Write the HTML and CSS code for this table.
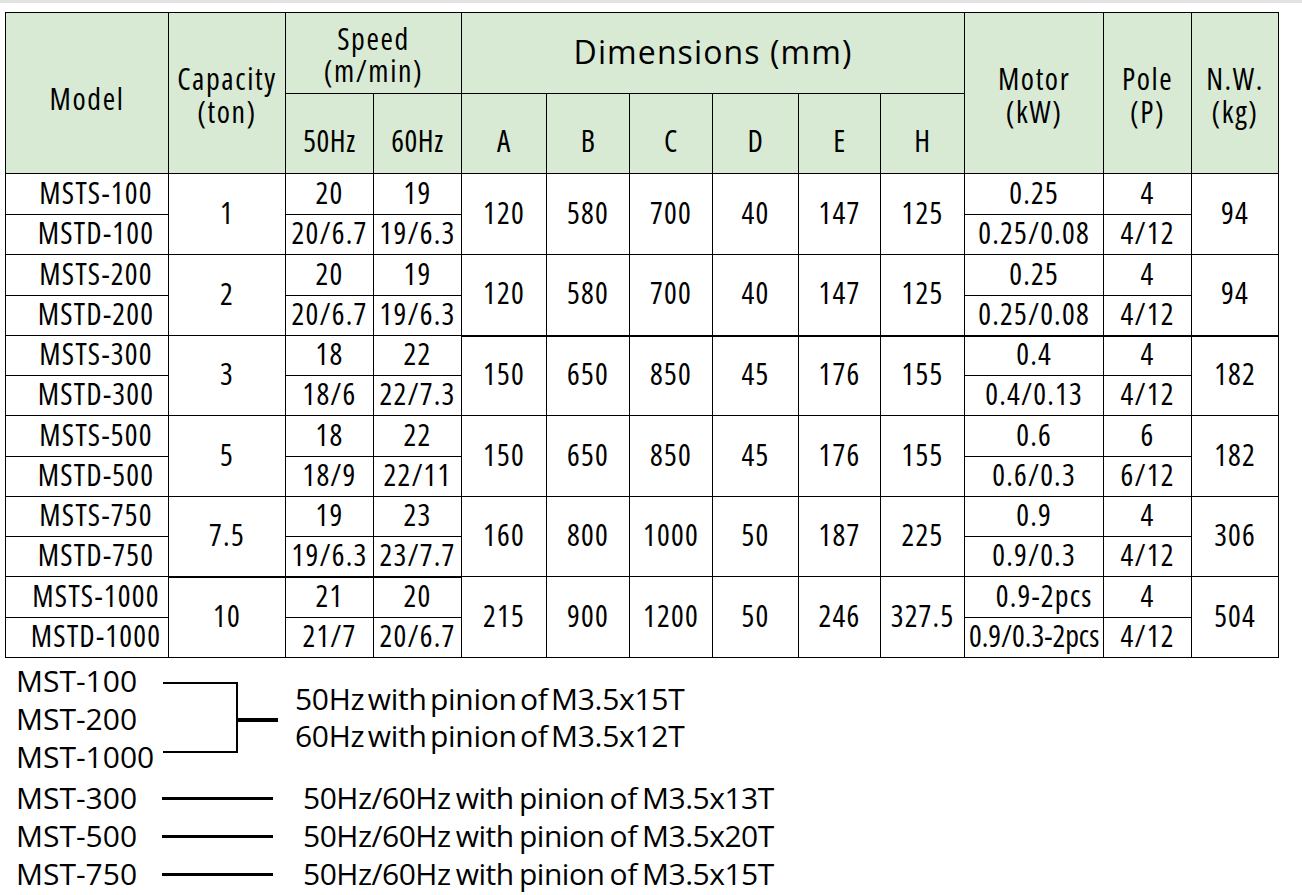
FILE: index.html
```html
<!DOCTYPE html>
<html lang="en">
<head>
<meta charset="utf-8">
<title>MST Specifications</title>
<link rel="stylesheet" href="styles.css">
</head>
<body>
<div class="topbar"></div>
<div class="sheet">
<table class="spec">
<colgroup>
<col class="c-model"><col class="c-cap"><col class="c-hz"><col class="c-hz">
<col class="c-a"><col class="c-b"><col class="c-c"><col class="c-d"><col class="c-e"><col class="c-h">
<col class="c-motor"><col class="c-pole"><col class="c-nw">
</colgroup>
<thead>
<tr class="hr1">
<th rowspan="2" class="h-model">Model</th>
<th rowspan="2" class="h-two">Capacity<br>(ton)</th>
<th colspan="2" class="h-speed">Speed<br>(m/min)</th>
<th colspan="6" class="h-dim">Dimensions (mm)</th>
<th rowspan="2" class="h-two">Motor<br>(kW)</th>
<th rowspan="2" class="h-two">Pole<br>(P)</th>
<th rowspan="2" class="h-two">N.W.<br>(kg)</th>
</tr>
<tr class="hr2">
<th class="h-sub">50Hz</th><th class="h-sub">60Hz</th>
<th class="h-sub">A</th><th class="h-sub">B</th><th class="h-sub">C</th><th class="h-sub">D</th><th class="h-sub">E</th><th class="h-sub">H</th>
</tr>
</thead>
<tbody>
<tr class="r1"><td class="model">MSTS-100</td><td rowspan="2">1</td><td>20</td><td>19</td><td rowspan="2">120</td><td rowspan="2">580</td><td rowspan="2">700</td><td rowspan="2">40</td><td rowspan="2">147</td><td rowspan="2">125</td><td>0.25</td><td>4</td><td rowspan="2">94</td></tr>
<tr class="r2"><td class="model">MSTD-100</td><td>20/6.7</td><td>19/6.3</td><td>0.25/0.08</td><td>4/12</td></tr>

<tr class="r1"><td class="model">MSTS-200</td><td rowspan="2">2</td><td>20</td><td>19</td><td rowspan="2">120</td><td rowspan="2">580</td><td rowspan="2">700</td><td rowspan="2">40</td><td rowspan="2">147</td><td rowspan="2">125</td><td>0.25</td><td>4</td><td rowspan="2">94</td></tr>
<tr class="r2"><td class="model">MSTD-200</td><td>20/6.7</td><td>19/6.3</td><td class="bb">0.25/0.08</td><td class="bb">4/12</td></tr>

<tr class="r1 short"><td class="model">MSTS-300</td><td rowspan="2">3</td><td>18</td><td>22</td><td rowspan="2" class="bt">150</td><td rowspan="2" class="bt">650</td><td rowspan="2" class="bt">850</td><td rowspan="2" class="bt">45</td><td rowspan="2" class="bt">176</td><td rowspan="2" class="bt">155</td><td class="bt">0.4</td><td class="bt">4</td><td rowspan="2" class="bt">182</td></tr>
<tr class="r2"><td class="model">MSTD-300</td><td>18/6</td><td>22/7.3</td><td>0.4/0.13</td><td>4/12</td></tr>

<tr class="r1"><td class="model">MSTS-500</td><td rowspan="2">5</td><td>18</td><td>22</td><td rowspan="2">150</td><td rowspan="2">650</td><td rowspan="2">850</td><td rowspan="2">45</td><td rowspan="2">176</td><td rowspan="2">155</td><td>0.6</td><td>6</td><td rowspan="2">182</td></tr>
<tr class="r2"><td class="model">MSTD-500</td><td>18/9</td><td>22/11</td><td>0.6/0.3</td><td>6/12</td></tr>

<tr class="r1 short"><td class="model">MSTS-750</td><td rowspan="2">7.5</td><td>19</td><td>23</td><td rowspan="2">160</td><td rowspan="2">800</td><td rowspan="2">1000</td><td rowspan="2">50</td><td rowspan="2">187</td><td rowspan="2">225</td><td>0.9</td><td>4</td><td rowspan="2">306</td></tr>
<tr class="r2"><td class="model">MSTD-750</td><td>19/6.3</td><td>23/7.7</td><td>0.9/0.3</td><td>4/12</td></tr>

<tr class="r1"><td class="model">MSTS-1000</td><td rowspan="2" class="bt">10</td><td class="bt">21</td><td class="bt">20</td><td rowspan="2">215</td><td rowspan="2">900</td><td rowspan="2">1200</td><td rowspan="2">50</td><td rowspan="2">246</td><td rowspan="2">327.5</td><td class="shift">0.9-2pcs</td><td>4</td><td rowspan="2">504</td></tr>
<tr class="r2"><td class="model">MSTD-1000</td><td>21/7</td><td>20/6.7</td><td class="tight">0.9/0.3-2pcs</td><td>4/12</td></tr>
</tbody>
</table>

<div class="notes">
<div class="group">
<div class="labels">
<div>MST-100</div>
<div>MST-200</div>
<div>MST-1000</div>
</div>
<div class="bracket"></div>
<div class="stem"></div>
<div class="gtext">
<div>50Hz with pinion of M3.5x15T</div>
<div>60Hz with pinion of M3.5x12T</div>
</div>
</div>
<div class="single first"><span class="lbl">MST-300</span><span class="dash"></span><span class="stxt">50Hz/60Hz with pinion of M3.5x13T</span></div>
<div class="single"><span class="lbl">MST-500</span><span class="dash"></span><span class="stxt">50Hz/60Hz with pinion of M3.5x20T</span></div>
<div class="single"><span class="lbl">MST-750</span><span class="dash"></span><span class="stxt">50Hz/60Hz with pinion of M3.5x15T</span></div>
</div>
</div>
</body>
</html>
```
FILE: styles.css
```css
html, body {
  margin: 0;
  padding: 0;
  background: #fff;
}
body {
  font-family: "Open Sans", "DejaVu Sans", sans-serif;
  color: #000;
  width: 1302px;
  height: 895px;
  overflow: hidden;
}
.topbar {
  height: 3px;
  background: #e2e2e2;
}
.sheet {
  padding: 9px 0 0 5px;
}
.spec {
  border-collapse: collapse;
  table-layout: fixed;
  width: 1274px;
}
.c-model { width: 163px; }
.c-cap { width: 117px; }
.c-hz { width: 88px; }
.c-a { width: 85px; }
.c-b { width: 83px; }
.c-c { width: 83px; }
.c-d { width: 86px; }
.c-e { width: 82px; }
.c-h { width: 84px; }
.c-motor { width: 139px; }
.c-pole { width: 88px; }
.c-nw { width: 87px; }

.spec th, .spec td {
  border: 1px solid #000;
  padding: 0;
  text-align: center;
  vertical-align: middle;
  font-weight: normal;
  font-size: 30px;
  font-stretch: 75%;
  line-height: 30px;
  white-space: nowrap;
}
.spec td {
  letter-spacing: 1.2px;
  padding-bottom: 3px;
}
.spec th {
  background: #d8e9d4;
  letter-spacing: 1.6px;
}
.hr1 { height: 81px; }
.hr2 { height: 80px; }
.spec th.h-two {
  line-height: 33px;
  padding-top: 3px;
}
.spec th.h-model { padding-top: 12px; }
.spec th.h-speed {
  line-height: 32px;
  padding-top: 3px;
}
.spec th.h-dim {
  font-size: 32px;
  font-stretch: 100%;
  letter-spacing: 1.1px;
  padding-bottom: 2px;
}
.spec th.h-sub {
  padding-top: 14px;
  letter-spacing: 0.6px;
}
.r1 { height: 41px; }
.r1.short { height: 40px; }
.r2 { height: 40px; }
.spec td.model { padding-left: 18px; }
.spec td.tight { letter-spacing: 0; }
.spec td.shift { padding-left: 20px; }
.spec .bt { border-top-width: 2px; }
.spec .bb { border-bottom-width: 2px; }

.notes {
  font-size: 30px;
  line-height: 1;
  padding-left: 11px;
}
.group {
  display: flex;
  align-items: flex-start;
}
.labels {
  width: 147px;
  flex: none;
  padding-top: 4px;
  display: flex;
  flex-direction: column;
}
.labels div {
  height: 38px;
  line-height: 38px;
  white-space: nowrap;
}
.bracket {
  flex: none;
  width: 73px;
  height: 67px;
  margin-top: 24px;
  border: 2px solid #000;
  border-left: none;
}
.stem {
  flex: none;
  width: 40px;
  height: 4px;
  margin-top: 60px;
  background: #000;
}
.gtext {
  margin-left: 17px;
  margin-top: 22px;
  word-spacing: -4px;
  letter-spacing: -0.3px;
}
.gtext div {
  height: 37px;
  line-height: 37px;
  white-space: nowrap;
}
.single {
  display: flex;
  align-items: center;
  height: 38px;
}
.single.first { margin-top: 3px; }
.lbl {
  width: 146px;
  flex: none;
}
.dash {
  flex: none;
  width: 111px;
  height: 3px;
  background: #000;
  margin-right: 30px;
}
.stxt {
  white-space: nowrap;
  word-spacing: -2px;
  letter-spacing: -0.5px;
}
```
